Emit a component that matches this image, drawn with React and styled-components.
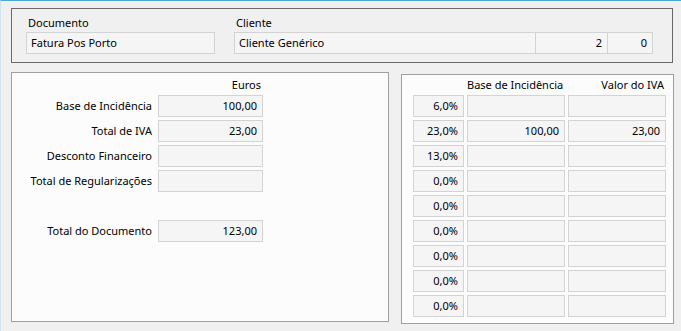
import React from 'react';
import styled, { createGlobalStyle } from 'styled-components';

const GlobalStyle = createGlobalStyle`
  html, body {
    margin: 0;
    padding: 0;
    background: #f0f0f0;
  }
  body {
    font-family: "Noto Sans", "Open Sans", sans-serif;
    font-size: 11px;
    color: #000;
  }
`;

const rates = ['6,0%', '23,0%', '13,0%', '0,0%', '0,0%', '0,0%', '0,0%', '0,0%', '0,0%'];
const vatRows = rates.map((rate) => ({
  rate,
  base: rate === '23,0%' ? '100,00' : '',
  vat: rate === '23,0%' ? '23,00' : '',
}));

const totals = [
  { label: 'Base de Incidência', value: '100,00' },
  { label: 'Total de IVA', value: '23,00' },
  { label: 'Desconto Financeiro', value: '' },
  { label: 'Total de Regularizações', value: '' },
  { spacer: true },
  { label: 'Total do Documento', value: '123,00' },
];

function App() {
  return (
    <Window>
      <GlobalStyle />
      <HeaderPanel>
        <FieldGroup>
          <Caption>Documento</Caption>
          <FieldRow>
            <Field $width={189}>Fatura Pos Porto</Field>
          </FieldRow>
        </FieldGroup>
        <FieldGroup>
          <Caption>Cliente</Caption>
          <FieldRow>
            <Field $width={302}>Cliente Genérico</Field>
            <Field $width={72} $right $joined>2</Field>
            <Field $width={45} $right $joined>0</Field>
          </FieldRow>
        </FieldGroup>
      </HeaderPanel>

      <Body>
        <TotalsPanel>
          <TotalsGrid>
            <span />
            <ColumnTitle>Euros</ColumnTitle>
            {totals.map((row, i) =>
              row.spacer ? (
                <Spacer key={i} />
              ) : (
                <React.Fragment key={i}>
                  <RowLabel>{row.label}</RowLabel>
                  <ValueBox>{row.value}</ValueBox>
                </React.Fragment>
              )
            )}
          </TotalsGrid>
        </TotalsPanel>

        <VatPanel>
          <VatGrid>
            <span />
            <ColumnTitle>Base de Incidência</ColumnTitle>
            <ColumnTitle>Valor do IVA</ColumnTitle>
            {vatRows.map((row, i) => (
              <React.Fragment key={i}>
                <ValueBox>{row.rate}</ValueBox>
                <ValueBox>{row.base}</ValueBox>
                <ValueBox>{row.vat}</ValueBox>
              </React.Fragment>
            ))}
          </VatGrid>
        </VatPanel>
      </Body>
    </Window>
  );
}

const Window = styled.div`
  width: 681px;
  height: 331px;
  box-sizing: border-box;
  background: #f0f0f0;
  border-top: 1px solid #4ea6d3;
  border-left: 1px solid #d2e4f1;
  padding: 7px 0 0 10px;
  display: flex;
  flex-direction: column;
  gap: 9px;
`;

const HeaderPanel = styled.section`
  width: 662px;
  height: 55px;
  box-sizing: border-box;
  border: 1px solid #6a6a6a;
  padding: 5px 0 0 14px;
  display: flex;
  gap: 19px;
`;

const FieldGroup = styled.div`
  display: flex;
  flex-direction: column;
`;

const Caption = styled.div`
  height: 17px;
  line-height: 17px;
  padding-left: 2px;
  margin-bottom: 1px;
`;

const FieldRow = styled.div`
  display: flex;
`;

const Field = styled.div`
  width: ${(p) => p.$width}px;
  height: 22px;
  box-sizing: border-box;
  border: 1px solid #d3d3d3;
  ${(p) => p.$joined && 'border-left: none;'}
  background: #f5f5f5;
  line-height: 20px;
  padding: 0 5px 0 4px;
  text-align: ${(p) => (p.$right ? 'right' : 'left')};
  white-space: nowrap;
`;

const Body = styled.div`
  display: flex;
  align-items: flex-start;
  gap: 12px;
`;

const Panel = styled.section`
  height: 250px;
  box-sizing: border-box;
  border: 1px solid #a0a0a0;
  background: #fcfcfc;
`;

const TotalsPanel = styled(Panel)`
  width: 378px;
  padding: 4px 0 0 0;
`;

const VatPanel = styled(Panel)`
  width: 273px;
  margin-top: 2px;
  padding: 2px 0 0 11px;
`;

const TotalsGrid = styled.div`
  display: grid;
  grid-template-columns: 140px 105px;
  column-gap: 6px;
  row-gap: 3px;
  grid-auto-rows: 22px;
  grid-template-rows: 15px;
`;

const VatGrid = styled.div`
  display: grid;
  grid-template-columns: 51px 98px 98px;
  column-gap: 3px;
  row-gap: 3px;
  grid-auto-rows: 22px;
  grid-template-rows: 15px;
`;

const ColumnTitle = styled.div`
  text-align: right;
  padding-right: 2px;
  line-height: 15px;
  white-space: nowrap;
`;

const RowLabel = styled.div`
  text-align: right;
  line-height: 22px;
  white-space: nowrap;
`;

const ValueBox = styled.div`
  box-sizing: border-box;
  border: 1px solid #d3d3d3;
  background: #f5f5f5;
  text-align: right;
  line-height: 20px;
  padding-right: 5px;
  white-space: nowrap;
`;

const Spacer = styled.div`
  grid-column: 1 / -1;
`;

export default App;
